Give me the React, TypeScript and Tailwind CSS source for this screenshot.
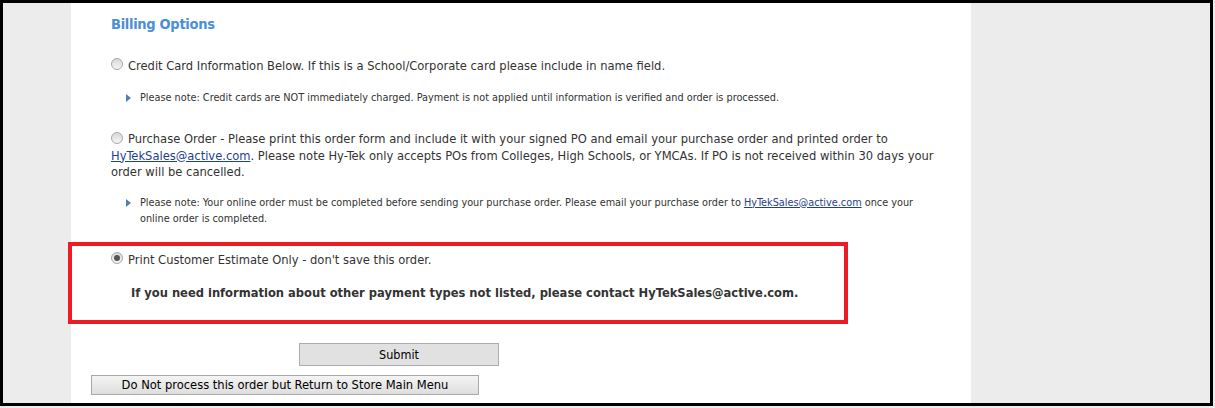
import React from 'react';

const Radio: React.FC<{ checked?: boolean }> = ({ checked }) => (
  <span className="inline-flex w-[12px] h-[12px] rounded-full border border-[#a8a8a8] bg-gradient-to-b from-[#d8d8d8] to-[#f6f6f6] items-center justify-center mr-[5px] relative top-[1px] shrink-0">
    {checked && <span className="w-[6px] h-[6px] rounded-full bg-[#555]" />}
  </span>
);

const Note: React.FC<{ children: React.ReactNode }> = ({ children }) => (
  <div className="flex pl-[15px] pr-[10px] text-[10.8px] leading-[16px]">
    <span className="w-0 h-0 border-y-[4px] border-y-transparent border-l-[5px] border-l-[#4f7fb3] mt-[4px] mr-[9px] shrink-0" />
    <div>{children}</div>
  </div>
);

const Link: React.FC<{ children: React.ReactNode }> = ({ children }) => (
  <a href="#" className="text-[#1f3f8f] underline">{children}</a>
);

export default function App() {
  return (
    <div className="w-[1215px] h-[408px] bg-[#ececec] overflow-hidden font-['Tahoma','DejaVu_Sans_Condensed','Liberation_Sans',sans-serif] text-[#333]">
      <div className="w-[1213px] h-[406px] border-[3px] border-black flex bg-[#ececec]">
        <div className="w-[68px] shrink-0" />
        <div className="w-[900px] shrink-0 bg-white pl-[40px] pr-[28px] pt-[11px] relative">
          <h2 className="text-[14.5px] font-bold text-[#4a8fd8] leading-[20px] tracking-[-0.3px]">Billing Options</h2>

          <div className="mt-[23px] text-[12.8px] leading-[17px] flex items-start">
            <Radio />
            <span>Credit Card Information Below. If this is a School/Corporate card please include in name field.</span>
          </div>
          <div className="mt-[16px]">
            <Note>Please note: Credit cards are NOT immediately charged. Payment is not applied until information is verified and order is processed.</Note>
          </div>

          <div className="mt-[25px] text-[12.8px] leading-[16.5px]">
            <Radio />
            Purchase Order - Please print this order form and include it with your signed PO and email your purchase order and printed order to <Link>HyTekSales@active.com</Link>. Please note Hy-Tek only accepts POs from Colleges, High Schools, or YMCAs. If PO is not received within 30 days your order will be cancelled.
          </div>
          <div className="mt-[14px]">
            <Note>
              Please note: Your online order must be completed before sending your purchase order. Please email your purchase order to <Link>HyTekSales@active.com</Link> once your online order is completed.
            </Note>
          </div>

          <div className="mt-[24px] text-[12.8px] leading-[17px] flex items-start">
            <Radio checked />
            <span>Print Customer Estimate Only - don't save this order.</span>
          </div>
          <div className="mt-[16px] pl-[20px] text-[12.8px] leading-[17px] font-bold">
            If you need information about other payment types not listed, please contact HyTekSales@active.com.
          </div>

          <div className="absolute left-[-3px] top-[239px] w-[780px] h-[82px] border-[4px] border-[#ed1c24] pointer-events-none" />

          <div className="mt-[41px] ml-[188px]">
            <button className="w-[200px] h-[23px] bg-[#e1e1e1] border border-[#adadad] text-[12.5px] text-black">Submit</button>
          </div>
          <div className="mt-[6px] ml-[-20px]">
            <button className="w-[388px] h-[20px] bg-gradient-to-b from-[#f4f4f4] to-[#dedede] border border-[#a8a8a8] text-[12.8px] text-black leading-[18px]">Do Not process this order but Return to Store Main Menu</button>
          </div>
        </div>
        <div className="flex-1" />
      </div>
    </div>
  );
}
